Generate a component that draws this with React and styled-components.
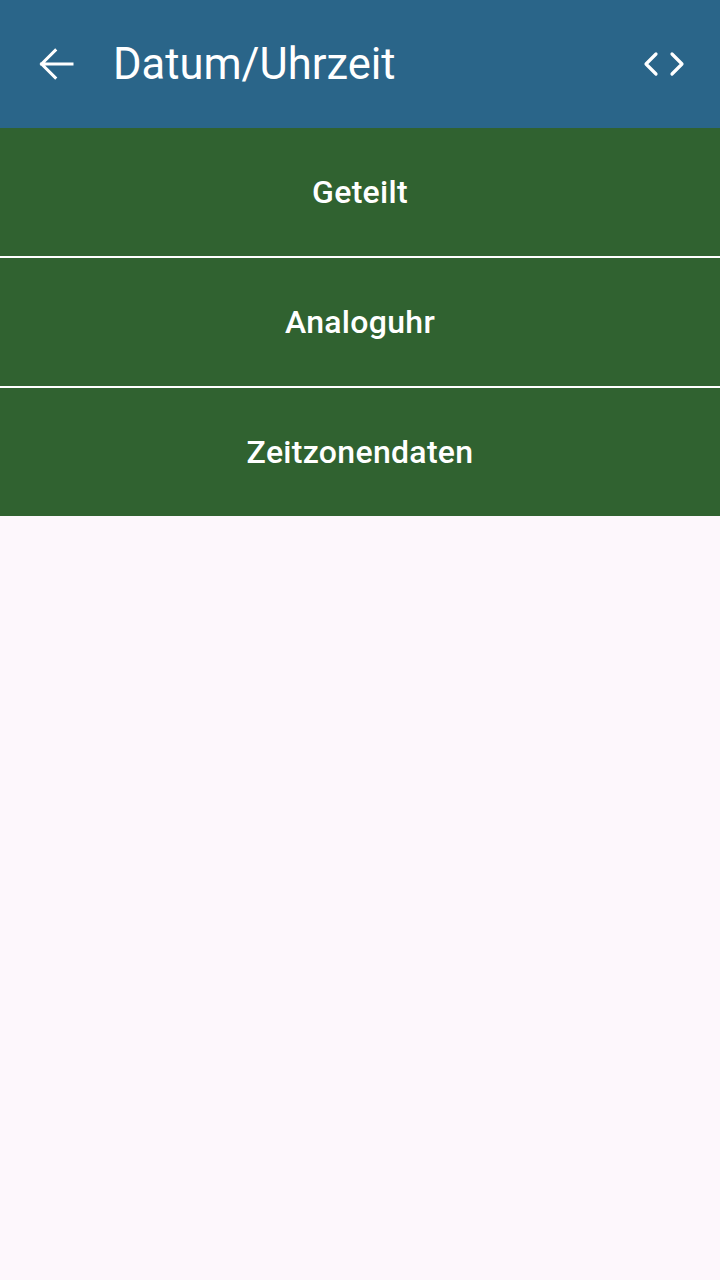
import React from 'react'
import styled, { createGlobalStyle } from 'styled-components'

const GlobalStyle = createGlobalStyle`
  html, body {
    margin: 0;
    padding: 0;
    background: #fdf7fc;
    font-family: Roboto, "Noto Sans", sans-serif;
  }
`

const Page = styled.div`
  min-height: 1280px;
  background: #fdf7fc;
`

const TopBar = styled.header`
  height: 128px;
  background: #2a6589;
  display: flex;
  align-items: center;
  padding: 0 34px 0 32px;
  color: #fff;
`

const IconButton = styled.button`
  border: none;
  background: none;
  padding: 0;
  color: #fff;
  display: flex;
  align-items: center;
  justify-content: center;
`

const Title = styled.h1`
  flex: 1;
  margin: 0 0 0 33px;
  font-size: 43.5px;
  font-weight: 400;
  letter-spacing: 0;
`

const Menu = styled.nav`
  display: flex;
  flex-direction: column;
  gap: 2px;
  background: #fff;
`

const MenuItem = styled.button`
  height: 128px;
  border: none;
  background: #306230;
  color: #fff;
  font-family: Roboto, sans-serif;
  font-size: 32px;
  font-weight: 500;
  letter-spacing: 0.3px;
`

const items = ['Geteilt', 'Analoguhr', 'Zeitzonendaten']

export default function App() {
  return (
    <Page>
      <GlobalStyle />
      <TopBar>
        <IconButton>
          <svg width="48" height="48" viewBox="0 0 24 24" fill="none" stroke="#fff" strokeWidth="1.5" strokeLinecap="square">
            <path d="M20 12H4.8M11.6 5.2L4.8 12l6.8 6.8" />
          </svg>
        </IconButton>
        <Title>Datum/Uhrzeit</Title>
        <IconButton>
          <svg width="44" height="28" viewBox="0 0 44 28" fill="none" stroke="#fff" strokeWidth="3.2" strokeLinecap="round" strokeLinejoin="round">
            <path d="M14 4L4 14l10 10M30 4l10 10-10 10" />
          </svg>
        </IconButton>
      </TopBar>
      <Menu>
        {items.map((label) => (
          <MenuItem key={label}>{label}</MenuItem>
        ))}
      </Menu>
    </Page>
  )
}
